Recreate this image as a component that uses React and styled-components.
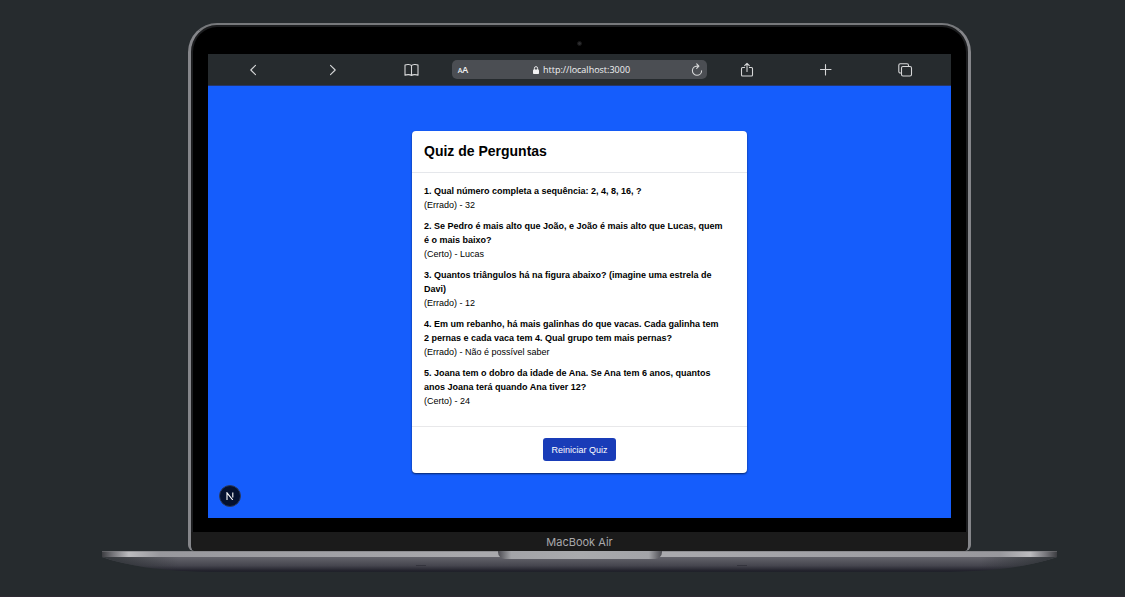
import React from "react";
import styled, { createGlobalStyle } from "styled-components";

const GlobalStyle = createGlobalStyle`
  *, *::before, *::after { box-sizing: border-box; }
  body {
    margin: 0;
    background: #262b2e;
    color: #000;
    font-family: "Liberation Sans", Arial, sans-serif;
  }
  h1, h2, p, ol { margin: 0; padding: 0; font: inherit; }
  button { font: inherit; border: 0; background: none; padding: 0; color: inherit; }
`;

const Page = styled.main`
  padding: 23px 68px 24px 102px;
  border-bottom: 1px solid #2e2a33;
`;

const Lid = styled.div`
  margin: 0 86px;
  border: 2px solid #77797c;
  border-left: 3px solid #85868a;
  border-right: 3px solid #85868a;
  border-bottom: 0;
  border-radius: 29px 29px 6px 6px;
  background: #000;
  box-shadow: inset 0 0 0 2px #1c1d1f;
  overflow: hidden;
`;

const Bezel = styled.div`
  display: flex;
  justify-content: center;
  align-items: center;
  height: 29px;
`;

const Camera = styled.span`
  width: 5px;
  height: 5px;
  margin-top: 8px;
  border-radius: 50%;
  background: #2c2c2e;
  border: 1px solid #161617;
`;

const Screen = styled.section`
  position: relative;
  margin: 0 17px;
  background: #155dfc;
`;

const Toolbar = styled.nav`
  display: grid;
  grid-template-columns: repeat(3, 1fr) minmax(0, 255px) repeat(3, 1fr);
  align-items: center;
  height: 32px;
  padding: 0 6px;
  background: #262b2e;
  border-bottom: 1px solid #26376b;
`;

const ToolButton = styled.button`
  display: flex;
  justify-content: center;
  align-items: center;
  height: 20px;
  color: #d6d7d8;
`;

const AddressBar = styled.div`
  display: grid;
  grid-template-columns: 20px 1fr 20px;
  align-items: center;
  height: 19px;
  border-radius: 5px;
  background: #4b4e53;
  color: #f2f2f3;
  font-family: "Open Sans", "Noto Sans", sans-serif;
  font-size: 9px;
  line-height: 12px;
`;

const TextSize = styled.button`
  padding-left: 2px;
  font-size: 9px;
  font-weight: 600;
  white-space: nowrap;

  small { font-size: 7px; }
`;

const Url = styled.span`
  display: flex;
  justify-content: center;
  align-items: center;
  gap: 4px;
  padding-left: 4px;
`;

const Viewport = styled.div`
  display: flex;
  justify-content: center;
  padding: 45px 16px;
`;

const Card = styled.article`
  width: 335px;
  max-width: 100%;
  border-radius: 4px;
  background: #fff;
  box-shadow: 0 1px 2px rgba(0, 0, 0, 0.6);
`;

const CardHeader = styled.header`
  padding: 11px 12px 12px;
  border-bottom: 1px solid #e5e7eb;
`;

const Title = styled.h1`
  && {
    font-size: 14px;
    line-height: 18px;
    font-weight: 700;
  }
`;

const Results = styled.ol`
  && {
    display: flex;
    flex-direction: column;
    gap: 7px;
    padding: 11px 22px 18px 12px;
    list-style: none;
    font-size: 9px;
    line-height: 14px;
  }
`;

const Question = styled.h2`
  && { font-weight: 700; }
`;

const CardFooter = styled.footer`
  display: flex;
  justify-content: center;
  padding: 11px 12px 12px;
  border-top: 1px solid #e8e8ea;
`;

const RestartButton = styled.button`
  height: 23px;
  padding: 0 8px;
  border-radius: 3px;
  background: #193cb8;
  color: #fff;
  font-size: 9px;
  line-height: 14px;
`;

const DevBadge = styled.button`
  position: absolute;
  left: 11px;
  bottom: 11px;
  display: flex;
  justify-content: center;
  align-items: center;
  width: 22px;
  height: 22px;
  border: 1px solid #2c3a5c;
  border-radius: 50%;
  background: #04112f;
  color: #fff;
`;

const Chin = styled.div`
  margin-top: 14px;
  height: 19px;
  background: #1b1b1b;
  border-radius: 0 0 6px 6px;
  color: #a9a9ab;
  font-family: Inter, sans-serif;
  font-size: 11px;
  line-height: 20px;
  text-align: center;
`;

const Base = styled.div`
  position: relative;
  height: 21px;
`;

const BaseShape = styled.svg`
  display: block;
  width: 100%;
  height: 21px;
`;

const Notch = styled.span`
  position: absolute;
  top: 0;
  left: 50%;
  width: 164px;
  height: 8px;
  transform: translateX(-50%);
  border-radius: 0 0 7px 7px;
  background: linear-gradient(90deg, #4c4c52, #a3a4a8 8%, #a9aaad 50%, #a3a4a8 92%, #4c4c52);
`;

const results = [
  { question: "Qual número completa a sequência: 2, 4, 8, 16, ?", correct: false, answer: "32" },
  { question: "Se Pedro é mais alto que João, e João é mais alto que Lucas, quem é o mais baixo?", correct: true, answer: "Lucas" },
  { question: "Quantos triângulos há na figura abaixo? (imagine uma estrela de Davi)", correct: false, answer: "12" },
  { question: "Em um rebanho, há mais galinhas do que vacas. Cada galinha tem 2 pernas e cada vaca tem 4. Qual grupo tem mais pernas?", correct: false, answer: "Não é possível saber" },
  { question: "Joana tem o dobro da idade de Ana. Se Ana tem 6 anos, quantos anos Joana terá quando Ana tiver 12?", correct: true, answer: "24" },
];

const Icon = ({ width = 16, height = 16, children }) => (
  <svg width={width} height={height} viewBox={`0 0 ${width} ${height}`} fill="none" stroke="currentColor" strokeWidth="1.1" strokeLinecap="round" strokeLinejoin="round" aria-hidden="true">
    {children}
  </svg>
);

const BrowserBar = () => (
  <Toolbar aria-label="Navegador">
    <ToolButton aria-label="Voltar"><Icon><path d="M9.5 3.3 4.8 8l4.700 4.700" /></Icon></ToolButton>
    <ToolButton aria-label="Avançar"><Icon><path d="M5.5 3.3 10.2 8l-4.700 4.700" /></Icon></ToolButton>
    <ToolButton aria-label="Favoritos">
      <Icon><path d="M7.5 3.6C6.6 2.3 2.6 2.3 1 3v10.200c1.600-.8 5.400-.8 6.500.3 1.100-1.100 4.900-1.100 6.500-.3V3c-1.600-.7-5.600-.7-6.500.6v9.900" /></Icon>
    </ToolButton>
    <AddressBar>
      <TextSize aria-label="Tamanho do texto"><small>A</small>A</TextSize>
      <Url>
        <svg width="6" height="8" viewBox="0 0 6 8" aria-hidden="true">
          <path d="M1.4 4V2.3a1.6 1.7 0 0 1 3.2 0V4" fill="none" stroke="currentColor" strokeWidth="0.9" />
          <rect x="0" y="3.5" width="6" height="4.5" rx="0.8" fill="currentColor" />
        </svg>
        http://localhost:3000
      </Url>
      <ToolButton aria-label="Recarregar">
        <Icon width={12} height={14}><path d="M7.500 3.100H6A4.600 4.600 0 1 0 10.600 7.700M5.700 0.900l2.200 2.200L5.700 5.300" /></Icon>
      </ToolButton>
    </AddressBar>
    <ToolButton aria-label="Compartilhar">
      <Icon><path d="M5.6 5.500H3.500a1 1 0 0 0-1 1v6.500a1 1 0 0 0 1 1h9a1 1 0 0 0 1-1V6.500a1 1 0 0 0-1-1h-2.100M8 9.500V1.500M5.700 3.700 8 1.400l2.300 2.300" /></Icon>
    </ToolButton>
    <ToolButton aria-label="Nova aba"><Icon><path d="M7.500 2.500v10.500M2.500 7.500h10.500" /></Icon></ToolButton>
    <ToolButton aria-label="Abas">
      <Icon><rect x="4.500" y="4.500" width="10" height="9.500" rx="1.500" /><path d="M4.500 11H3.300a1.500 1.500 0 0 1-1.500-1.500V3.300a1.500 1.500 0 0 1 1.500-1.500h6.700a1.500 1.500 0 0 1 1.500 1.500v1.200" /></Icon>
    </ToolButton>
  </Toolbar>
);

const LaptopBase = () => (
  <Base>
    <BaseShape viewBox="0 0 955 21" preserveAspectRatio="none" aria-hidden="true">
      <defs>
        <linearGradient id="underside" x1="0" y1="0" x2="0" y2="1">
          <stop offset="0.28" stopColor="#64646c" />
          <stop offset="0.7" stopColor="#45454e" />
          <stop offset="0.95" stopColor="#20202a" />
          <stop offset="1" stopColor="#20232b" />
        </linearGradient>
        <linearGradient id="edge" x1="0" y1="0" x2="1" y2="0">
          <stop offset="0" stopColor="#3c3d41" />
          <stop offset="0.012" stopColor="#77777c" />
          <stop offset="0.028" stopColor="#bcbcbf" />
          <stop offset="0.06" stopColor="#98989d" />
          <stop offset="0.4" stopColor="#a9a9ad" />
          <stop offset="0.6" stopColor="#a9a9ad" />
          <stop offset="0.94" stopColor="#98989d" />
          <stop offset="0.972" stopColor="#bcbcbf" />
          <stop offset="0.988" stopColor="#77777c" />
          <stop offset="1" stopColor="#3c3d41" />
        </linearGradient>
        <linearGradient id="fade" x1="0" y1="0" x2="1" y2="0">
          <stop offset="0" stopColor="#262b2e" stopOpacity="0.8" />
          <stop offset="0.08" stopColor="#262b2e" stopOpacity="0" />
          <stop offset="0.92" stopColor="#262b2e" stopOpacity="0" />
          <stop offset="1" stopColor="#262b2e" stopOpacity="0.8" />
        </linearGradient>
      </defs>
      <path d="M0 0H955V6C935 13 900 21 835 21H120C55 21 20 13 0 6Z" fill="url(#underside)" />
      <path d="M0 0H955V6C935 13 900 21 835 21H120C55 21 20 13 0 6Z" fill="url(#fade)" />
      <rect width="955" height="6" fill="url(#edge)" />
      <path d="M0 0.5H955" stroke="#77777b" strokeOpacity="0.5" />
      <path d="M314 14.500h10M635 14.500h10" stroke="#34343d" strokeWidth="1" />
    </BaseShape>
    <Notch />
  </Base>
);

export default function App() {
  return (
    <>
      <GlobalStyle />
      <Page>
        <Lid>
          <Bezel><Camera /></Bezel>
          <Screen>
            <BrowserBar />
            <Viewport>
              <Card>
                <CardHeader><Title>Quiz de Perguntas</Title></CardHeader>
                <Results>
                  {results.map(({ question, correct, answer }, i) => (
                    <li key={question}>
                      <Question>{`${i + 1}. ${question}`}</Question>
                      <p>{`(${correct ? "Certo" : "Errado"}) - ${answer}`}</p>
                    </li>
                  ))}
                </Results>
                <CardFooter><RestartButton>Reiniciar Quiz</RestartButton></CardFooter>
              </Card>
            </Viewport>
            <DevBadge aria-label="Next.js">
              <svg width="8" height="8" viewBox="0 0 8 8" fill="none" stroke="currentColor" strokeWidth="1.1" aria-hidden="true">
                <path d="M1 8V0.8L6.8 8M6.8 0.5V5.5" />
              </svg>
            </DevBadge>
          </Screen>
          <Chin>MacBook Air</Chin>
        </Lid>
        <LaptopBase />
      </Page>
    </>
  );
}
